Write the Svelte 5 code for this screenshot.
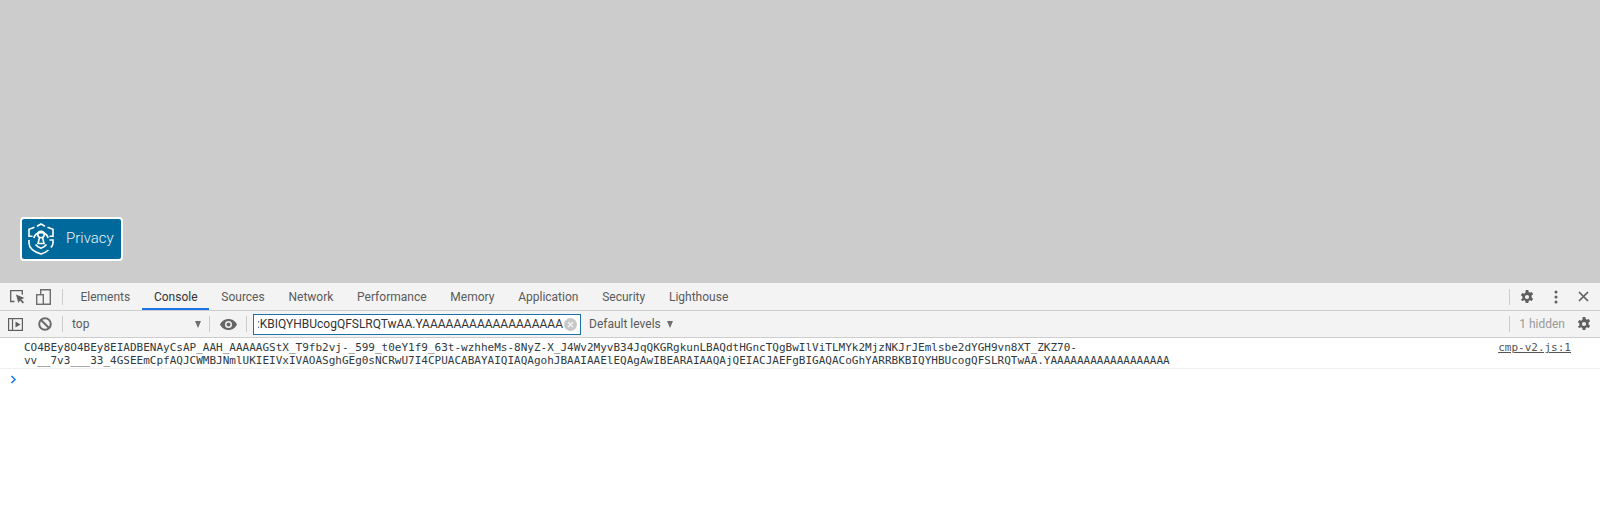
<script>
  const tabs = ['Elements', 'Console', 'Sources', 'Network', 'Performance', 'Memory', 'Application', 'Security', 'Lighthouse'];
  const active = 'Console';
  const filter = ':KBIQYHBUcogQFSLRQTwAA.YAAAAAAAAAAAAAAAAAA';
  const line1 = 'CO4BEy8O4BEy8EIADBENAyCsAP_AAH_AAAAAGStX_T9fb2vj-_599_t0eY1f9_63t-wzhheMs-8NyZ-X_J4Wv2MyvB34JqQKGRgkunLBAQdtHGncTQgBwIlViTLMYk2MjzNKJrJEmlsbe2dYGH9vn8XT_ZKZ70-';
  const line2 = 'vv__7v3___33_4GSEEmCpfAQJCWMBJNmlUKIEIVxIVAOASghGEg0sNCRwU7I4CPUACABAYAIQIAQAgohJBAAIAAElEQAgAwIBEARAIAAQAjQEIACJAEFgBIGAQACoGhYARRBKBIQYHBUcogQFSLRQTwAA.YAAAAAAAAAAAAAAAAAA';
  // cog with six teeth, 14x14 box
  const gear = 'M5.7 0h2.600l.4 2c.4.15.8.4 1.150.65l1.950-.65 1.300 2.250-1.550 1.350a4.800 4.800 0 0 1 0 1.800l1.550 1.350-1.300 2.250-1.950-.65c-.35.25-.75.5-1.150.65l-.4 2H5.700l-.4-2a5 5 0 0 1-1.150-.65l-1.950.65L.9 9.750 2.450 8.400a4.800 4.800 0 0 1 0-1.800L.9 5.250 2.200 3l1.950.65c.35-.25.75-.5 1.150-.65zM7 9.100a2.100 2.100 0 1 0 0-4.200 2.100 2.100 0 0 0 0 4.200z';
</script>

<div class="page">
  <div class="viewport">
    <button class="privacy">
      <svg width="26" height="32" viewBox="0 0 26 32" fill="none" stroke="#fff" stroke-width="1.600">
        <path d="M9 3.200 13 1l4 2.200M19.500 4.200 25 6.200v7h-3.500M4.500 13.200H1v-7l5.500-2" />
        <path d="M1 17v3c0 5 5.500 9 12 11 2.800-.8 5.500-2.200 7.500-4M22.800 24.500c1.500-1.400 2.200-3 2.200-4.500v-3h-3.500" />
        <path d="M5.800 15a7.500 7.500 0 0 1 14.400 0" />
        <path d="M7.500 21.500c1.300 1.700 3.300 3 5.500 3.700 2.200-.7 4.200-2 5.500-3.700" />
        <circle cx="13" cy="11.500" r="3.200" />
        <path d="M11.500 14.500 10 20.500h6l-1.500-6" />
      </svg>
      <span>Privacy</span>
    </button>
  </div>

  <div class="devtools">
    <div class="tabbar">
      <div class="tool-icons">
        <svg class="inspect" width="15" height="14" viewBox="0 0 15 14" fill="none" stroke="#5f5f5f" stroke-width="1.300">
          <path d="M4.500 11.500H.7V.7h11.600v4" />
          <path d="M6 4.500 14.500 8l-3.200 1.300 2.700 3-1.300 1.300-2.600-3-1.800 2.400z" fill="#5f5f5f" stroke="none" />
        </svg>
        <svg class="device" width="15" height="16" viewBox="0 0 15 16" fill="none" stroke="#6e6e6e" stroke-width="1.400">
          <path d="M4.700 5.500V.7h9.600v14.600H7.500" />
          <rect x=".7" y="5.700" width="6.600" height="9.600" />
        </svg>
      </div>
      <div class="sep"></div>
      <div class="tabs">
        {#each tabs as tab}
          <div class="tab" class:active={tab === active}>{tab}</div>
        {/each}
      </div>
      <div class="right">
        <div class="sep"></div>
        <svg class="gear" width="14" height="14" viewBox="0 0 14 14"><path d={gear} fill="#5f5f5f" fill-rule="evenodd" /></svg>
        <svg class="dots" width="4" height="14" viewBox="0 0 4 14"><circle cx="2" cy="2" r="1.500" /><circle cx="2" cy="7" r="1.500" /><circle cx="2" cy="12" r="1.500" /></svg>
        <svg class="close" width="11" height="11" viewBox="0 0 11 11"><path d="M1 1l9 9M10 1l-9 9" stroke="#5f5f5f" stroke-width="1.700" /></svg>
      </div>
    </div>

    <div class="toolbar">
      <svg class="sidebar-toggle" width="15" height="13" viewBox="0 0 15 13" fill="none" stroke="#5f5f5f" stroke-width="1.200">
        <rect x=".6" y=".6" width="13.800" height="11.800" />
        <path d="M4.500 .6v11.800" />
        <path d="M7.500 3.500 12.500 6.500l-5 3z" fill="#5f5f5f" stroke="none" />
      </svg>
      <svg class="clear" width="14" height="14" viewBox="0 0 14 14" fill="none" stroke="#6a6a6a" stroke-width="2">
        <circle cx="7" cy="7" r="5.800" />
        <path d="M3 3l8 8" />
      </svg>
      <div class="sep"></div>
      <div class="context">
        <span>top</span>
        <i class="caret"></i>
      </div>
      <div class="sep"></div>
      <svg class="eye" width="17" height="11" viewBox="0 0 17 11">
        <path fill-rule="evenodd" fill="#666" d="M8.500 0C4.800 0 1.600 2.200 0 5.500 1.600 8.800 4.800 11 8.500 11S15.400 8.800 17 5.500C15.400 2.200 12.200 0 8.500 0zM8.500 9a3.500 3.500 0 1 1 0-7 3.500 3.500 0 0 1 0 7zM8.500 7.500a2 2 0 1 0 0-4 2 2 0 0 0 0 4z" />
      </svg>
      <div class="sep"></div>
      <div class="filter">
        <div class="filter-clip"><span class="filter-text">{filter}</span></div>
        <svg class="clear-filter" width="13" height="13" viewBox="0 0 13 13">
          <circle cx="6.500" cy="6.500" r="6.500" fill="#c8c8c8" />
          <path d="M4 4l5 5M9 4l-5 5" stroke="#f5f5f5" stroke-width="1.300" />
        </svg>
      </div>
      <div class="levels">
        <span>Default levels</span>
        <i class="caret"></i>
      </div>
      <div class="right">
        <div class="sep"></div>
        <span class="hidden-count">1 hidden</span>
        <svg class="gear" width="14" height="14" viewBox="0 0 14 14"><path d={gear} fill="#5f5f5f" fill-rule="evenodd" /></svg>
      </div>
    </div>

    <div class="console">
      <div class="message">
        <div class="message-text">{line1}<br />{line2}</div>
        <span class="source">cmp-v2.js:1</span>
      </div>
      <div class="prompt">
        <svg width="7" height="9" viewBox="0 0 7 9" fill="none" stroke="#1a73e8" stroke-width="1.500"><path d="M1.500 1 5 4.500 1.500 8" /></svg>
      </div>
    </div>
  </div>
</div>

<style>
  :global(body) {
    margin: 0;
    background: #fff;
  }
  .page {
    width: 1600px;
    height: 514px;
    display: flex;
    flex-direction: column;
    overflow: hidden;
    font-family: Roboto, "Liberation Sans", sans-serif;
    font-size: 12px;
    color: #333;
  }
  .viewport {
    position: relative;
    height: 283px;
    background: #ccc;
    flex: none;
  }
  .privacy {
    position: absolute;
    left: 20px;
    top: 217px;
    width: 103px;
    height: 44px;
    box-sizing: border-box;
    display: flex;
    align-items: center;
    gap: 12px;
    padding: 0 0 0 6px;
    background: #00699b;
    border: 2px solid #fff;
    border-radius: 4px;
    color: #e6f3fa;
    font-family: Roboto, sans-serif;
    font-size: 15px;
    font-weight: 300;
  }
  .privacy span {
    padding-bottom: 2px;
  }
  .devtools {
    flex: 1;
    display: flex;
    flex-direction: column;
    min-height: 0;
  }
  .tabbar {
    height: 27px;
    background: #f3f3f3;
    border-bottom: 1px solid #cdcdcd;
    display: flex;
    align-items: center;
    flex: none;
  }
  .tool-icons {
    display: flex;
    align-items: center;
    gap: 11px;
    padding-left: 10px;
    width: 52px;
  }
  .sep {
    width: 1px;
    height: 16px;
    background: #ccc;
    flex: none;
  }
  .tabs {
    display: flex;
    height: 100%;
    margin-left: 5.500px;
  }
  .tab {
    display: flex;
    align-items: center;
    padding: 2px 11.900px 0;
    color: #5a5a5a;
    height: 100%;
    box-sizing: border-box;
    border-bottom: 2px solid transparent;
  }
  .tab.active {
    color: #333;
    border-bottom-color: #1a73e8;
  }
  .right {
    margin-left: auto;
    display: flex;
    align-items: center;
  }
  .tabbar .right > .sep { margin-right: 10px; }
  .dots { margin-left: 20px; fill: #5f5f5f; }
  .close { margin-left: 20px; margin-right: 11px; }
  .toolbar {
    height: 26px;
    background: #f3f3f3;
    border-bottom: 1px solid #cdcdcd;
    display: flex;
    align-items: center;
    flex: none;
  }
  .sidebar-toggle { margin-left: 8px; }
  .clear { margin-left: 15px; margin-right: 10px; }
  .context {
    width: 146px;
    box-sizing: border-box;
    padding: 0 8px 0 9px;
    display: flex;
    align-items: center;
    justify-content: space-between;
    color: #5a5a5a;
  }
  .caret {
    display: block;
    width: 0;
    height: 0;
    border-left: 3.500px solid transparent;
    border-right: 3.500px solid transparent;
    border-top: 7px solid #6e6e6e;
  }
  .eye { margin: 0 9px 0 10px; }
  .filter {
    margin-left: 6px;
    width: 328px;
    height: 21px;
    box-sizing: border-box;
    border: 1px solid #1a73a8;
    background: #fff;
    display: flex;
    align-items: center;
    padding: 0 3px 0 4px;
    gap: 1px;
    flex: none;
  }
  .filter-clip {
    flex: 1;
    min-width: 0;
    overflow: hidden;
    display: flex;
    justify-content: flex-end;
  }
  .filter-text {
    flex: none;
    white-space: nowrap;
    color: #333;
  }
  .clear-filter { flex: none; }
  .levels {
    display: flex;
    align-items: center;
    gap: 6px;
    margin-left: 8px;
    color: #5a5a5a;
  }
  .hidden-count {
    color: #9a9a9a;
    margin-left: 9px;
  }
  .toolbar .gear { margin-left: 12px; margin-right: 9px; }
  .console {
    flex: 1;
    background: #fff;
  }
  .message {
    display: flex;
    justify-content: space-between;
    padding: 3px 29px 1px 24px;
    border-bottom: 1px solid #f0f0f0;
    font-family: "DejaVu Sans Mono", monospace;
    font-size: 11px;
    line-height: 13px;
    color: #303942;
  }
  .message-text {
    white-space: nowrap;
  }
  .source {
    color: #555;
    text-decoration: underline;
  }
  .prompt {
    padding: 6px 0 0 10px;
    line-height: 0;
  }
</style>
